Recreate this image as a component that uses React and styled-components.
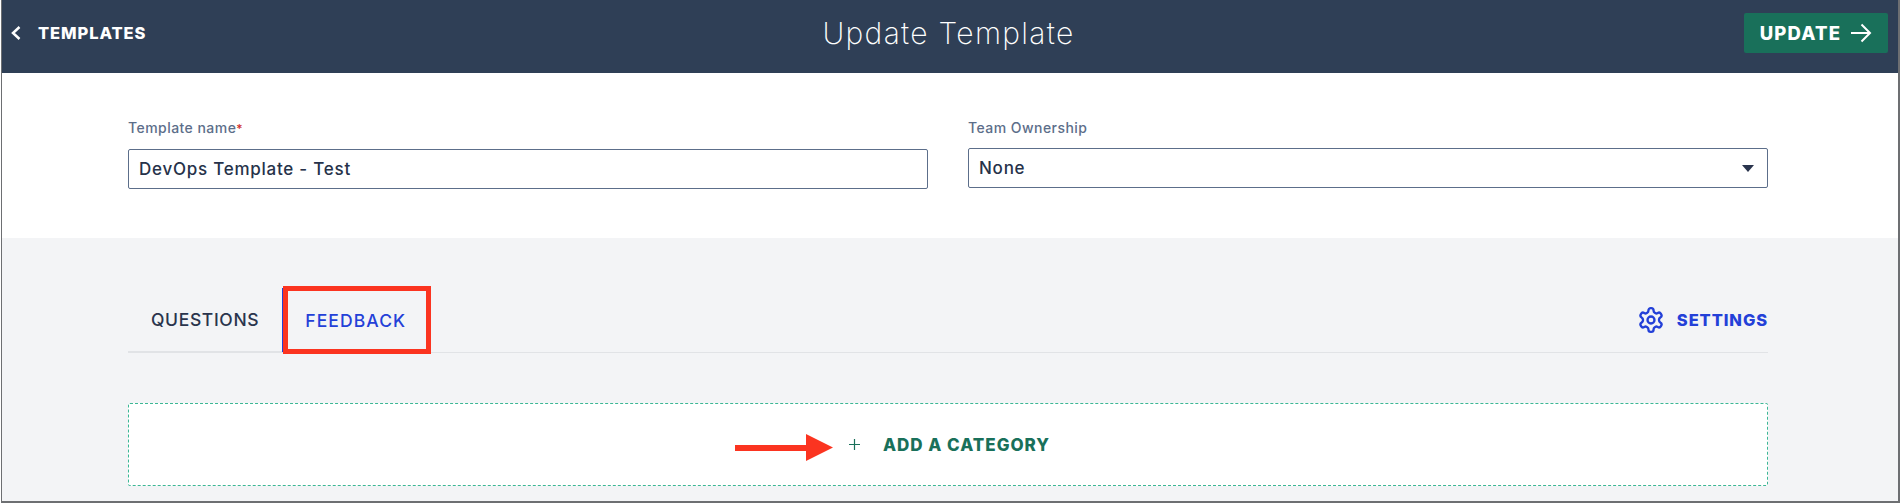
import React from 'react';
import styled, { createGlobalStyle } from 'styled-components';

const Global = createGlobalStyle`
  html, body { margin: 0; padding: 0; background: #fff; }
  * { box-sizing: border-box; }
  body { font-family: Inter, "Noto Sans", sans-serif; }
`;

const Frame = styled.div`
  width: 1899px;
  height: 503px;
  margin-left: 1px;
  border-left: 1px solid #6d6f72;
  border-right: 2px solid #6d6f72;
  border-bottom: 2px solid #6d6f72;
  display: flex;
  flex-direction: column;
  overflow: hidden;
`;

const Header = styled.header`
  height: 73px;
  flex: none;
  background: #2f3f56;
  display: grid;
  grid-template-columns: 1fr auto 1fr;
  align-items: center;
  padding: 0 10px 7px 9px;
`;

const BackLink = styled.a`
  display: flex;
  align-items: center;
  gap: 17px;
  color: #fff;
  font-size: 16.5px;
  font-weight: 800;
  letter-spacing: 0.9px;
`;

const Title = styled.h1`
  margin: 0 2px 0 0;
  color: #fff;
  font-size: 30px;
  font-weight: 200;
  letter-spacing: 1.3px;
`;

const UpdateButton = styled.button`
  justify-self: end;
  width: 144px;
  height: 40px;
  border: 0;
  border-radius: 2px;
  background: #19705a;
  color: #fff;
  font: 800 18.5px Inter, sans-serif;
  letter-spacing: 1.2px;
  display: flex;
  align-items: center;
  justify-content: center;
  gap: 9px;
`;

const FormSection = styled.section`
  height: 165px;
  flex: none;
  background: #fff;
  padding: 45px 0 0 126px;
  display: grid;
  grid-template-columns: 800px 800px;
  column-gap: 40px;
`;

const Field = styled.div`
  display: flex;
  flex-direction: column;
  gap: 10px;
`;

const Label = styled.label`
  font-size: 14px;
  line-height: 20px;
  font-weight: 500;
  color: #5c6e8a;
  letter-spacing: 0.45px;
`;

const Required = styled.span`
  color: #d0312d;
  font-size: 12px;
`;

const InputBox = styled.div`
  height: 40px;
  border: 1px solid #5c6e8a;
  border-radius: 2px;
  padding: 0 10px;
  display: flex;
  align-items: center;
  justify-content: space-between;
  color: #26324a;
  font-size: 17px;
  font-weight: 500;
  letter-spacing: 0.75px;
`;

const Caret = styled.span`
  width: 0;
  height: 0;
  border-left: 6px solid transparent;
  border-right: 6px solid transparent;
  border-top: 7px solid #2a344d;
  margin-right: 3px;
`;

const Body = styled.section`
  flex: 1;
  background: #f3f4f6;
  padding: 48px 130px 0 126px;
  display: flex;
  flex-direction: column;
`;

const TabRow = styled.div`
  height: 67px;
  flex: none;
  display: flex;
  align-items: stretch;
  border-bottom: 1px solid #e1e3e6;
`;

const Tab = styled.div`
  position: relative;
  display: flex;
  align-items: center;
  padding: 0 23px;
  font-size: 17.5px;
  font-weight: 500;
  letter-spacing: ${p => (p.$active ? '1.1px' : '0.65px')};
  color: ${p => (p.$active ? '#2340d8' : '#2a344d')};
  margin-top: ${p => (p.$active ? '2px' : '0')};
  padding-left: ${p => (p.$active ? '22px' : '23px')};
  border-left: ${p => (p.$active ? '1px solid #2340d8' : '0')};
  box-shadow: ${p => (p.$active ? 'none' : 'inset 0 -1px 0 #e1e3e6')};
`;

const Highlight = styled.span`
  position: absolute;
  left: 0;
  top: -2px;
  width: 148px;
  height: 68px;
  border: 5px solid #fb3420;
`;

const SettingsLink = styled.a`
  margin-left: auto;
  display: flex;
  align-items: center;
  gap: 14px;
  padding-top: 2px;
  color: #2340d8;
  font-size: 16.5px;
  font-weight: 800;
  letter-spacing: 0.9px;
`;

const AddCategory = styled.div`
  margin-top: 50px;
  height: 83px;
  flex: none;
  background: #fff;
  border: 1px dashed #3cb795;
  border-radius: 2px;
  display: flex;
  align-items: center;
  justify-content: center;
  gap: 23px;
  color: #19705a;
  font-size: 17px;
  font-weight: 800;
  letter-spacing: 1px;
  padding-left: 3px;
`;

const PlusSlot = styled.span`
  position: relative;
  display: flex;
`;

const Annotation = styled.svg`
  position: absolute;
  right: 27px;
  top: -5px;
`;

const Gear = () => (
  <svg width="24" height="26" viewBox="1.7 1 20.6 22" preserveAspectRatio="none" fill="none" stroke="#2340d8" strokeWidth="2" strokeLinejoin="round" strokeLinecap="round">
    <circle cx="12" cy="12" r="3" />
    <path d="M12.22 2h-.44a2 2 0 0 0-2 2v.18a2 2 0 0 1-1 1.73l-.43.25a2 2 0 0 1-2 0l-.15-.08a2 2 0 0 0-2.73.73l-.22.38a2 2 0 0 0 .73 2.73l.15.1a2 2 0 0 1 1 1.72v.51a2 2 0 0 1-1 1.74l-.15.09a2 2 0 0 0-.73 2.73l.22.38a2 2 0 0 0 2.73.73l.15-.08a2 2 0 0 1 2 0l.43.25a2 2 0 0 1 1 1.73V20a2 2 0 0 0 2 2h.44a2 2 0 0 0 2-2v-.18a2 2 0 0 1 1-1.73l.43-.25a2 2 0 0 1 2 0l.15.08a2 2 0 0 0 2.73-.73l.22-.39a2 2 0 0 0-.73-2.73l-.15-.08a2 2 0 0 1-1-1.74v-.5a2 2 0 0 1 1-1.74l.15-.09a2 2 0 0 0 .73-2.73l-.22-.38a2 2 0 0 0-2.73-.73l-.15.08a2 2 0 0 1-2 0l-.43-.25a2 2 0 0 1-1-1.73V4a2 2 0 0 0-2-2z" />
  </svg>
);

export default function App() {
  return (
    <>
      <Global />
      <Frame>
        <Header>
          <BackLink>
            <svg width="10" height="14" viewBox="0 0 10 14" fill="none" stroke="#fff" strokeWidth="2.5"><path d="M8.5 1 2 7l6.5 6" /></svg>
            TEMPLATES
          </BackLink>
          <Title>Update Template</Title>
          <UpdateButton>
            UPDATE
            <svg width="22" height="20" viewBox="0 0 22 20" fill="none" stroke="#fff" strokeWidth="2"><path d="M1 10h19M11.5 1.5 20 10l-8.5 8.5" /></svg>
          </UpdateButton>
        </Header>
        <FormSection>
          <Field>
            <Label>Template name<Required>*</Required></Label>
            <InputBox>DevOps Template - Test</InputBox>
          </Field>
          <Field>
            <Label>Team Ownership</Label>
            <InputBox>None<Caret /></InputBox>
          </Field>
        </FormSection>
        <Body>
          <TabRow>
            <Tab>QUESTIONS</Tab>
            <Tab $active>FEEDBACK<Highlight /></Tab>
            <SettingsLink><Gear />SETTINGS</SettingsLink>
          </TabRow>
          <AddCategory>
            <PlusSlot>
              <Annotation width="98" height="27" viewBox="0 0 98 27"><path d="M0 11h71V0l27 13.5L71 27V17H0z" fill="#fb3420" /></Annotation>
              <svg width="11" height="11" viewBox="0 0 11 11" stroke="#19705a" strokeWidth="1.2"><path d="M5.5 0v11M0 5.5h11" /></svg>
            </PlusSlot>
            ADD A CATEGORY
          </AddCategory>
        </Body>
      </Frame>
    </>
  );
}
